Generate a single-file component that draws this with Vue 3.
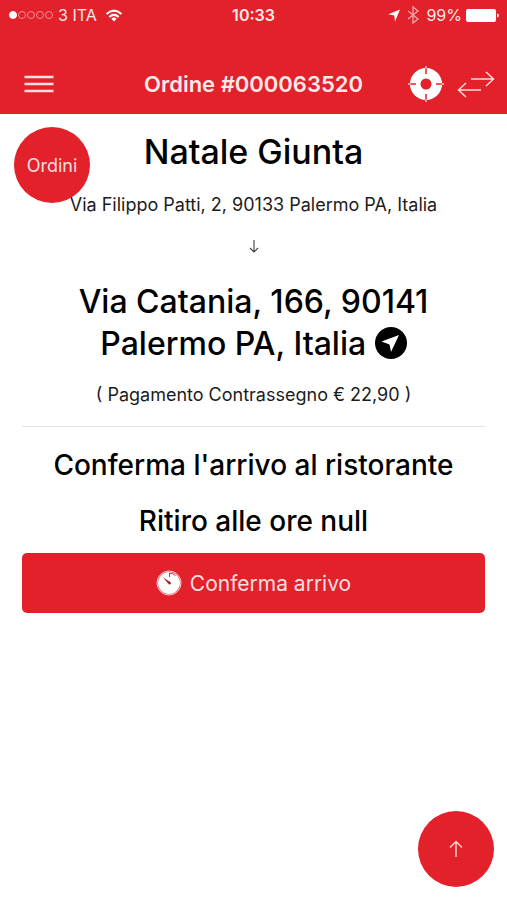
<script setup>
import { ref } from 'vue'

const order = ref({
  number: '000063520',
  restaurant: 'Natale Giunta',
  pickup: 'Via Filippo Patti, 2, 90133 Palermo PA, Italia',
  delivery: 'Via Catania, 166, 90141 Palermo PA, Italia',
  payment: 'Contrassegno',
  total: '22,90',
  pickupTime: null
})

const signal = 1

const scrollToTop = () => {
  window.scrollTo({ top: 0, behavior: 'smooth' })
}
</script>

<template>
  <div class="screen">
    <header class="header">
      <div class="status-bar">
        <div class="status-left">
          <span class="signal">
            <i v-for="n in 5" :key="n" class="dot" :class="{ on: n <= signal }"></i>
          </span>
          <span>3 ITA</span>
          <svg class="wifi" width="18" height="13" viewBox="0 0 18 13" fill="none" stroke="#fff" stroke-width="2">
            <path d="M1.5 5Q9-1.800 16.500 5" />
            <path d="M4.300 8Q9 3.700 13.700 8" />
            <path d="M6.300 9.800Q9 7.400 11.700 9.800L9 12.600z" fill="#fff" stroke="none" />
          </svg>
        </div>
        <span class="status-time">10:33</span>
        <div class="status-right">
          <svg width="12" height="13" viewBox="0 0 12 13" fill="#fff">
            <path d="M12 0.500L7 12.500L6.300 6.600L0.300 5.200z" />
          </svg>
          <svg class="bluetooth" width="12" height="18" viewBox="0 0 12 18" fill="none" stroke="#fff" stroke-width="1.300">
            <path d="M1 5L11 13L6 17V1L11 5L1 13" />
          </svg>
          <span class="battery">
            99%
            <svg width="33" height="13" viewBox="0 0 33 13" fill="#fff">
              <rect width="30" height="13" rx="2" />
              <path d="M31 4.500Q33 5 33 6.500T31 8.500z" />
            </svg>
          </span>
        </div>
      </div>

      <div class="nav-bar">
        <button class="icon-button menu" type="button" aria-label="Menu">
          <svg width="30" height="18" viewBox="0 0 30 18" stroke="#ffdede" stroke-width="2.400">
            <path d="M0.500 2H29.500M0.500 9H29.500M0.500 16H29.500" />
          </svg>
        </button>
        <h1 class="nav-title">Ordine #{{ order.number }}</h1>
        <div class="nav-actions">
          <button class="icon-button" type="button" aria-label="Posizione">
            <svg width="36" height="36" viewBox="0 0 36 36">
              <circle cx="18" cy="18" r="16" fill="#fff" />
              <circle cx="18" cy="18" r="5.500" fill="#e2212a" />
              <path d="M18 2V8M18 28V34M2 18H8M28 18H34" stroke="#e2212a" stroke-width="1.500" />
              <path d="M18 0V2.500M18 33.500V36M0 18H2.500M33.500 18H36" stroke="#fbc9cb" stroke-width="1.500" />
            </svg>
          </button>
          <button class="icon-button" type="button" aria-label="Cambia">
            <svg width="38" height="28" viewBox="0 0 38 28" fill="none" stroke="#ffdcdc" stroke-width="1.500">
              <path d="M14 9H36M29 2L36.500 9L29 16M24 20H2M9 13L1.500 20L9 27" />
            </svg>
          </button>
        </div>
      </div>
    </header>

    <main class="content">
      <a class="round-button orders" href="#ordini">Ordini</a>

      <h2 class="heading restaurant">{{ order.restaurant }}</h2>
      <p class="detail">{{ order.pickup }}</p>
      <svg class="arrow-down" width="10" height="14" viewBox="0 0 10 14" fill="none" stroke="#444" stroke-width="1.100">
        <path d="M5 1V13M1 9L5 13L9 9" />
      </svg>
      <h2 class="heading delivery">
        {{ order.delivery }}
        <a href="#mappa" class="navigate" aria-label="Naviga">
          <svg width="32" height="32" viewBox="0 0 32 32">
            <circle cx="16" cy="16" r="16" fill="#000" />
            <path d="M24 8L16 25L14.500 17.500L6.500 14.500z" fill="#fff" />
          </svg>
        </a>
      </h2>
      <p class="detail">( Pagamento {{ order.payment }} € {{ order.total }} )</p>

      <hr class="divider" />

      <h3 class="step">Conferma l'arrivo al ristorante</h3>
      <h3 class="step">Ritiro alle ore {{ String(order.pickupTime) }}</h3>

      <button class="confirm" type="button">
        <svg width="26" height="26" viewBox="0 0 26 26">
          <circle cx="13" cy="13" r="12" fill="none" stroke="#ffd9da" stroke-width="1" />
          <circle cx="13" cy="13" r="11" fill="#fff" />
          <path d="M13.500 7V3Q17 3 19.500 5.500" fill="none" stroke="#e2212a" stroke-width="1" />
          <path d="M7 7.500L14.800 12.300Q15.500 14.800 13 14.500z" fill="#b3202a" />
        </svg>
        Conferma arrivo
      </button>
    </main>

    <button class="round-button to-top" type="button" aria-label="Torna su" @click="scrollToTop">
      <svg width="14" height="18" viewBox="0 0 14 18" fill="none" stroke="#ffd2c8" stroke-width="1.500">
        <path d="M7 17V1.500M1 7.500L7 1.500L13 7.500" />
      </svg>
    </button>
  </div>
</template>

<style>
body {
  background: #fff;
}
</style>

<style scoped>
.screen {
  --red: #e2212a;
  min-height: 100vh;
  background: #fff;
  color: #000;
  font-family: Inter, "Liberation Sans", sans-serif;
}

svg {
  display: block;
  flex: none;
}

button {
  border: 0;
  font-family: inherit;
  cursor: pointer;
}

.header {
  background: var(--red);
  color: #ffe9e9;
}

.status-bar {
  display: grid;
  grid-template-columns: 1fr auto 1fr;
  align-items: center;
  height: 30px;
  padding: 0 8px;
  font-size: 16px;
}

.status-left,
.status-right,
.battery {
  display: flex;
  align-items: center;
  gap: 4px;
}

.status-right {
  justify-content: flex-end;
  gap: 7px;
}

.wifi {
  margin-left: 4px;
}

.bluetooth {
  opacity: 0.6;
}

.signal {
  display: flex;
  gap: 1px;
  padding: 0 1px;
}

.dot {
  box-sizing: border-box;
  width: 8px;
  height: 8px;
  border: 1px solid #f58a8e;
  border-radius: 50%;
}

.dot.on {
  border-color: #fff;
  background: #fff;
}

.status-time {
  font-weight: 600;
}

.nav-bar {
  display: grid;
  grid-template-columns: 1fr auto 1fr;
  align-items: center;
  height: 60px;
  padding: 24px 12px 0;
}

.nav-title {
  margin: 0;
  font-size: 22px;
  font-weight: 600;
  line-height: 28px;
}

.nav-actions {
  display: flex;
  align-items: center;
  justify-content: flex-end;
  gap: 13px;
}

.icon-button {
  justify-self: start;
  padding: 0;
  background: none;
}

.menu {
  padding-left: 12px;
}

.content {
  position: relative;
  padding: 17px 22px;
  text-align: center;
}

.round-button {
  display: flex;
  align-items: center;
  justify-content: center;
  width: 76px;
  height: 76px;
  border-radius: 50%;
  background: var(--red);
  color: #ffdfe0;
  font-size: 18px;
  text-decoration: none;
}

.orders {
  position: absolute;
  top: 13px;
  left: 14px;
}

.to-top {
  position: fixed;
  right: 13px;
  bottom: 13px;
}

.heading {
  margin: 0;
  font-size: 32px;
  font-weight: 500;
  line-height: 42px;
}

.restaurant {
  margin-bottom: 20px;
  font-size: 34px;
}

.detail {
  margin: 0;
  color: #1c1c1c;
  font-size: 18px;
  line-height: 24px;
}

.arrow-down {
  margin: 22px auto 28px;
}

.delivery {
  max-width: 380px;
  margin: 0 auto 18px;
}

.navigate {
  display: inline-block;
  vertical-align: -4px;
}

.divider {
  height: 1px;
  margin: 19px 0 20px;
  border: 0;
  background: #e4e4e4;
}

.step {
  margin: 0 0 20px;
  font-size: 28px;
  font-weight: 500;
  line-height: 36px;
}

.confirm {
  display: flex;
  align-items: center;
  justify-content: center;
  gap: 8px;
  width: 100%;
  height: 60px;
  margin-top: -6px;
  border-radius: 5px;
  background: var(--red);
  color: #ffdfe0;
  font-size: 21px;
}
</style>
